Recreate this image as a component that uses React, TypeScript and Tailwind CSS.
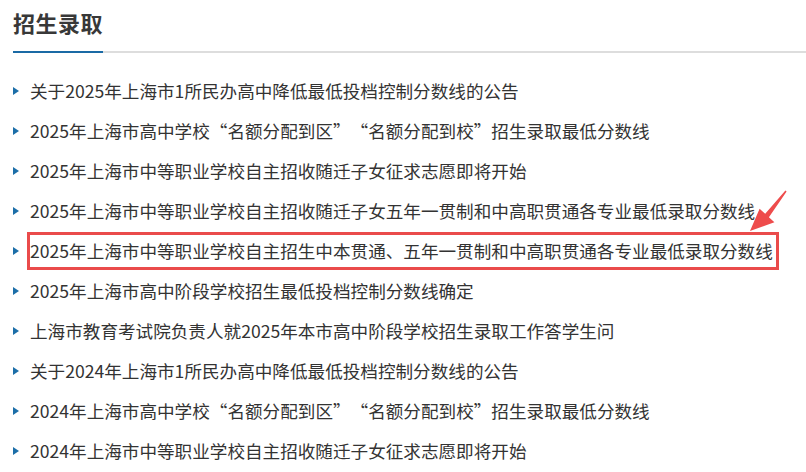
import React from 'react';

const items = [
  '关于2025年上海市1所民办高中降低最低投档控制分数线的公告',
  '2025年上海市高中学校“名额分配到区”“名额分配到校”招生录取最低分数线',
  '2025年上海市中等职业学校自主招收随迁子女征求志愿即将开始',
  '2025年上海市中等职业学校自主招收随迁子女五年一贯制和中高职贯通各专业最低录取分数线',
  '2025年上海市中等职业学校自主招生中本贯通、五年一贯制和中高职贯通各专业最低录取分数线',
  '2025年上海市高中阶段学校招生最低投档控制分数线确定',
  '上海市教育考试院负责人就2025年本市高中阶段学校招生录取工作答学生问',
  '关于2024年上海市1所民办高中降低最低投档控制分数线的公告',
  '2024年上海市高中学校“名额分配到区”“名额分配到校”招生录取最低分数线',
  '2024年上海市中等职业学校自主招收随迁子女征求志愿即将开始',
];

const font = { fontFamily: '"Noto Sans CJK SC", "Noto Sans", sans-serif' };

// curly quotes take a full CJK cell, like the site's font renders them
const Title: React.FC<{ text: string }> = ({ text }) => (
  <>
    {text.split(/([“”])/).map((part, i) =>
      part === '“' ? (
        <span key={i} className="inline-block w-[1em] text-right">“</span>
      ) : part === '”' ? (
        <span key={i} className="inline-block w-[1em] text-left">”</span>
      ) : (
        <React.Fragment key={i}>{part}</React.Fragment>
      )
    )}
  </>
);

const App: React.FC = () => {
  return (
    <div className="relative w-[806px] h-[472px] overflow-hidden bg-white pl-[13px]" style={font}>
      {/* section header */}
      <div className="pt-[6px]">
        <h2 className="text-[22px] leading-[32px] font-bold text-[#383838] tracking-[0.5px]">招生录取</h2>
        <div className="mt-[13px] flex h-[2px]">
          <div className="w-[90px] bg-[#1a6aa5]"></div>
          <div className="flex-1 bg-[#dddddd]"></div>
        </div>
      </div>

      {/* news list */}
      <ul className="mt-[18px]">
        {items.map((text, i) => (
          <li key={i} className="flex h-[40px] items-center text-[17.6px] text-[#333333]">
            <span className="mr-[11px] h-0 w-0 border-y-[4.5px] border-l-[6px] border-y-transparent border-l-[#1b6ea8]"></span>
            {i === 4 ? (
              <span className="-ml-[3px] flex h-[38px] items-center border-[3px] border-[#ea4b4b] pr-[3px] whitespace-nowrap">
                <Title text={text} />
              </span>
            ) : (
              <span className="whitespace-nowrap">
                <Title text={text} />
              </span>
            )}
          </li>
        ))}
      </ul>

      {/* pointer arrow */}
      <svg className="absolute left-[740px] top-[186px]" width="55" height="55" viewBox="0 0 55 55">
        <polygon
          points="10,45 19.6,22.8 25.2,27.8 45.4,4.5 46.6,5.6 28.9,31.2 34.4,36.2"
          fill="#ee4c4c"
        />
      </svg>
    </div>
  );
};

export default App;
